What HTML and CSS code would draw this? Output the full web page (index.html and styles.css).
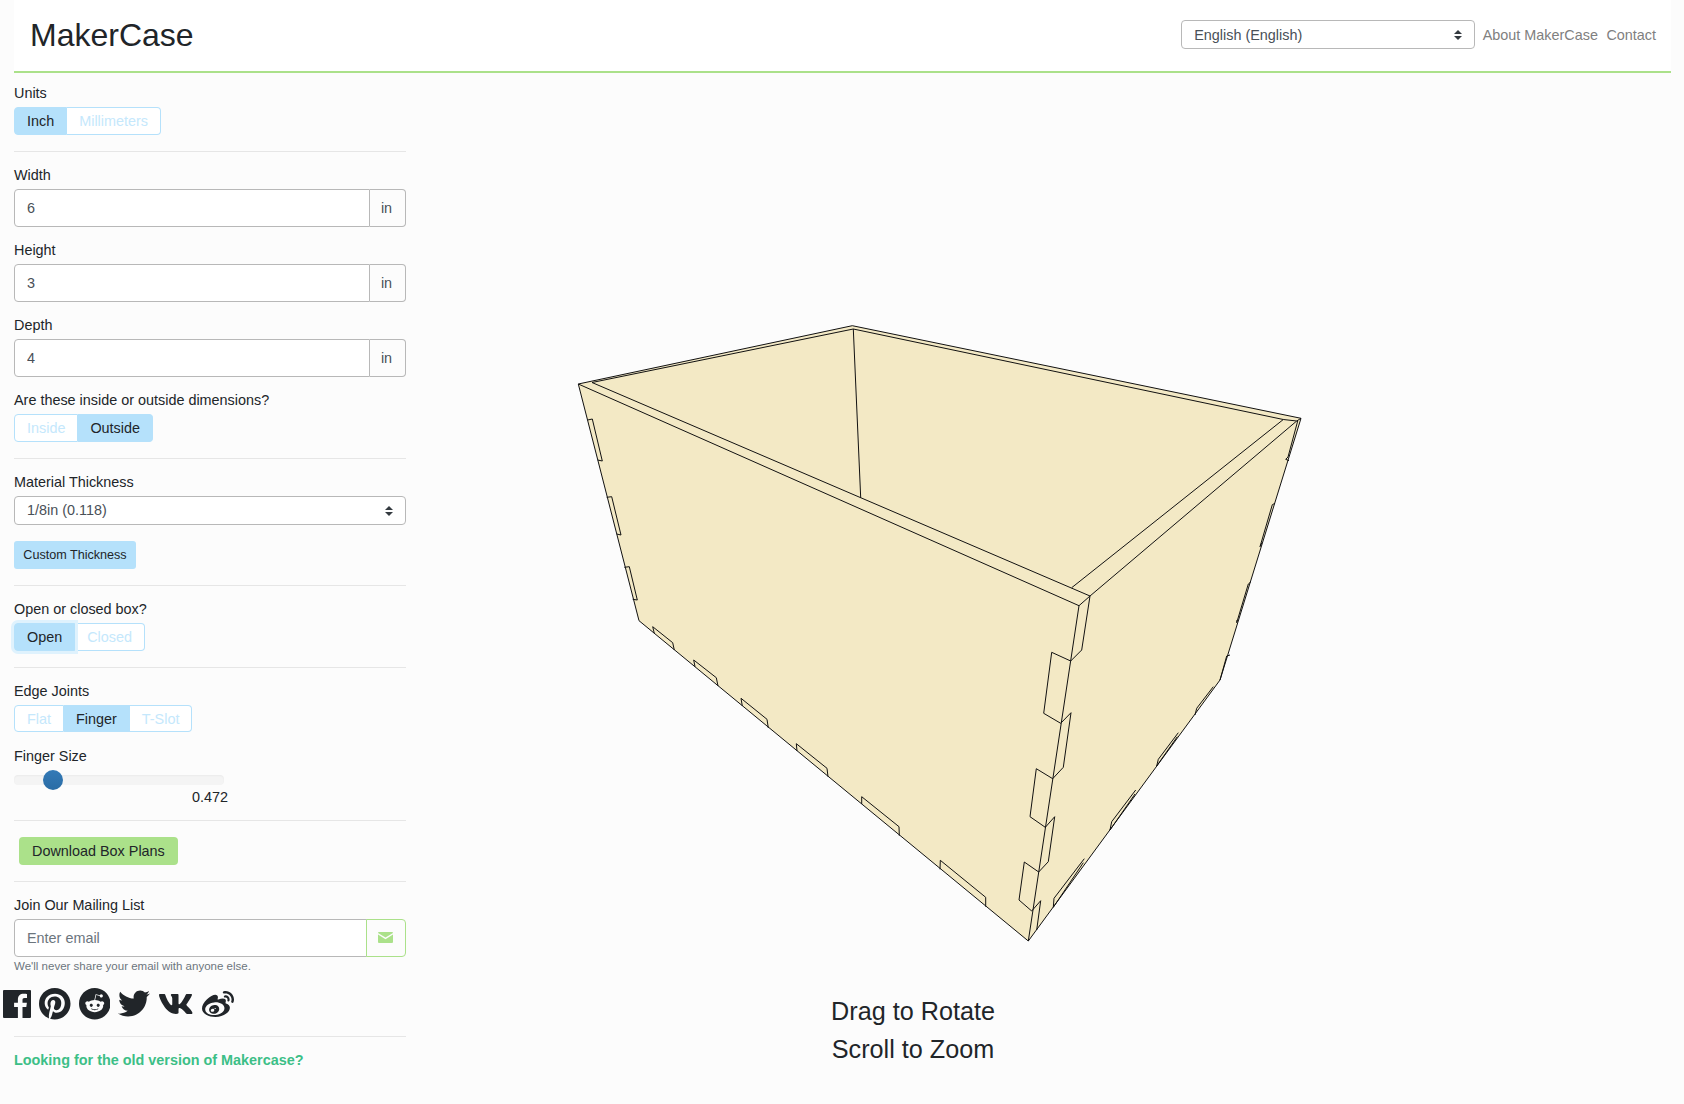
FILE: index.html
```html
<!DOCTYPE html>
<html lang="en">
<head>
  <meta charset="UTF-8">
  <meta name="viewport" content="width=device-width, initial-scale=1.0">
  <title>MakerCase</title>
  <link rel="stylesheet" href="styles.css">
</head>
<body>
  <header class="topbar">
    <h1 class="logo">MakerCase</h1>
    <div class="topbar-right">
      <div class="select-wrap lang-select">
        <select class="select"><option>English (English)</option></select>
        <svg class="caret" viewBox="0 0 8 10"><path d="M4 0 8 4H0zM0 6h8l-4 4z"/></svg>
      </div>
      <a class="nav-link" href="#">About MakerCase</a>
      <a class="nav-link" href="#">Contact</a>
    </div>
  </header>

  <div class="page">
    <aside class="sidebar">
      <label class="field-label">Units</label>
      <div class="toggle">
        <button class="toggle-btn on">Inch</button>
        <button class="toggle-btn">Millimeters</button>
      </div>
      <hr class="rule">

      <label class="field-label tall">Width</label>
      <div class="input-group">
        <input class="input" type="text" value="6">
        <span class="addon">in</span>
      </div>
      <label class="field-label tall next">Height</label>
      <div class="input-group">
        <input class="input" type="text" value="3">
        <span class="addon">in</span>
      </div>
      <label class="field-label tall next">Depth</label>
      <div class="input-group">
        <input class="input" type="text" value="4">
        <span class="addon">in</span>
      </div>

      <label class="field-label after-inputs">Are these inside or outside dimensions?</label>
      <div class="toggle">
        <button class="toggle-btn">Inside</button>
        <button class="toggle-btn on">Outside</button>
      </div>
      <hr class="rule">

      <label class="field-label">Material Thickness</label>
      <div class="select-wrap">
        <select class="select"><option>1/8in (0.118)</option></select>
        <svg class="caret" viewBox="0 0 8 10"><path d="M4 0 8 4H0zM0 6h8l-4 4z"/></svg>
      </div>
      <button class="small-btn">Custom Thickness</button>
      <hr class="rule">

      <label class="field-label">Open or closed box?</label>
      <div class="toggle">
        <button class="toggle-btn on focused">Open</button>
        <button class="toggle-btn">Closed</button>
      </div>
      <hr class="rule">

      <label class="field-label">Edge Joints</label>
      <div class="toggle">
        <button class="toggle-btn">Flat</button>
        <button class="toggle-btn on">Finger</button>
        <button class="toggle-btn">T-Slot</button>
      </div>

      <label class="field-label finger-label">Finger Size</label>
      <input class="slider" type="range" min="0" max="100" value="15">
      <div class="slider-value">0.472</div>
      <hr class="rule after-slider">

      <button class="download-btn">Download Box Plans</button>
      <hr class="rule">

      <label class="field-label">Join Our Mailing List</label>
      <div class="input-group">
        <input class="input email" type="text" placeholder="Enter email">
        <button class="mail-btn" aria-label="Subscribe">
          <svg class="mail-icon" viewBox="0 0 15 11"><path d="M0 1a1 1 0 0 1 1-1h13a1 1 0 0 1 1 1L7.5 5.6zM0 2.6l7.5 4.6L15 2.6V10a1 1 0 0 1-1 1H1a1 1 0 0 1-1-1z"/></svg>
        </button>
      </div>
      <small class="hint">We'll never share your email with anyone else.</small>

      <div class="social">
        <a href="#" class="social-fb"><svg viewBox="0 0 28 28"><path d="M0 1a1 1 0 0 1 1-1h26a1 1 0 0 1 1 1v26a1 1 0 0 1-1 1h-7.500V17h3.800l.6-4.300h-4.400V10c0-1.300.4-2.100 2.200-2.100H24V4c-.4-.1-1.800-.2-3.400-.2-3.400 0-5.700 2-5.700 5.800v3.100h-3.800V17h3.800v11H1a1 1 0 0 1-1-1z"/></svg></a>
        <a href="#" class="social-pin"><svg viewBox="0 8 496 496"><path d="M496 256c0 137-111 248-248 248-25.600 0-50.200-3.900-73.400-11.100 10.100-16.500 25.200-43.500 30.800-65 3-11.600 15.400-59 15.400-59 8.100 15.400 31.700 28.500 56.800 28.500 74.800 0 128.700-68.800 128.700-154.300 0-81.900-66.900-143.200-152.900-143.200-107 0-163.900 71.800-163.900 150.100 0 36.400 19.400 81.700 50.300 96.100 4.700 2.200 7.200 1.200 8.300-3.300.8-3.400 5-20.300 6.900-28.100.6-2.500.3-4.700-1.700-7.100-10.100-12.500-18.300-35.300-18.300-56.600 0-54.700 41.400-107.600 112-107.600 60.900 0 103.600 41.500 103.600 100.900 0 67.100-33.900 113.600-78 113.600-24.300 0-42.600-20.100-36.700-44.800 7-29.500 20.500-61.300 20.500-82.600 0-19-10.200-34.900-31.400-34.900-24.900 0-44.900 25.700-44.900 60.200 0 22 7.400 36.800 7.400 36.800s-24.500 103.800-29 123.200c-5 21.400-3 51.600-.9 71.200C65.400 450.900 0 361.100 0 256 0 119 111 8 248 8s248 111 248 248z"/></svg></a>
        <a href="#" class="social-red"><svg viewBox="8 8 496 496"><path d="M201.500 305.500c-13.800 0-24.900-11.100-24.900-24.600 0-13.800 11.100-24.900 24.900-24.900 13.600 0 24.600 11.100 24.600 24.900 0 13.600-11.100 24.600-24.600 24.600zM504 256c0 137-111 248-248 248S8 393 8 256 119 8 256 8s248 111 248 248zm-132.300-41.200c-9.400 0-17.700 3.900-23.800 10-22.400-15.500-52.600-25.500-86.100-26.600l17.400-78.300 55.400 12.500c0 13.600 11.100 24.600 24.600 24.600 13.800 0 24.900-11.300 24.900-24.900s-11.100-24.900-24.900-24.900c-9.700 0-18 5.800-22.100 13.800l-61.200-13.600c-3-.8-6.100 1.400-6.900 4.400l-19.100 86.400c-33.200 1.400-63.100 11.300-85.500 26.800-6.100-6.400-14.700-10.200-24.100-10.200-34.900 0-46.300 46.900-14.400 62.800-1.100 5-1.700 10.200-1.700 15.500 0 52.600 59.200 95.200 132 95.200 73.100 0 132.300-42.600 132.300-95.200 0-5.300-.6-10.800-1.900-15.800 31.300-16 19.800-62.500-14.900-62.500zM302.800 331c-18.200 18.200-76.100 17.900-93.600 0-2.200-2.200-6.100-2.200-8.300 0-2.500 2.500-2.500 6.400 0 8.600 22.800 22.800 87.300 22.800 110.200 0 2.500-2.200 2.500-6.100 0-8.600-2.200-2.200-6.100-2.200-8.300 0zm7.700-75c-13.600 0-24.600 11.100-24.600 24.900 0 13.600 11.100 24.600 24.600 24.600 13.800 0 24.900-11.100 24.900-24.600 0-13.800-11-24.900-24.900-24.900z"/></svg></a>
        <a href="#" class="social-tw"><svg viewBox="0 48 512 416"><path d="M459.370 151.716c.325 4.548.325 9.097.325 13.645 0 138.720-105.583 298.558-298.558 298.558-59.452 0-114.680-17.219-161.137-47.106 8.447.974 16.568 1.299 25.340 1.299 49.055 0 94.213-16.568 130.274-44.832-46.132-.975-84.792-31.188-98.112-72.772 6.498.974 12.995 1.624 19.818 1.624 9.421 0 18.843-1.300 27.614-3.573-48.081-9.747-84.143-51.980-84.143-102.985v-1.299c13.969 7.797 30.214 12.670 47.431 13.319-28.264-18.843-46.781-51.005-46.781-87.391 0-19.492 5.197-37.360 14.294-52.954 51.655 63.675 129.300 105.258 216.365 109.807-1.624-7.797-2.599-15.918-2.599-24.040 0-57.828 46.782-104.934 104.934-104.934 30.213 0 57.502 12.670 76.670 33.137 23.715-4.548 46.456-13.645 66.599-25.665-7.798 24.366-24.366 44.833-46.132 57.827 21.117-2.273 41.584-8.122 60.426-16.243-14.292 20.791-32.161 39.308-52.628 54.253z"/></svg></a>
        <a href="#" class="social-vk"><svg viewBox="14 96 548 320"><path d="M545 117.700c3.700-12.500 0-21.700-17.800-21.700h-58.900c-15 0-21.900 7.900-25.600 16.700 0 0-31.500 77.300-76 127.400-14.400 14.500-21 19.100-28.900 19.100-3.900 0-9.100-4.600-9.100-17.100V117.700c0-15-4.400-21.700-16.900-21.700h-92.600c-9.400 0-15 7-15 13.500 0 14.200 21.200 17.500 23.400 57.500v86.800c0 19-3.400 22.500-10.900 22.500-20 0-68.600-73.400-97.400-157.400-5.800-16.300-11.500-22.900-26.600-22.900H34.400C17.600 96 14.200 103.900 14.200 112.700c0 15.600 20 93.100 93.100 195.500C156 378.100 224.700 416 287.100 416c37.500 0 42.100-8.400 42.100-22.900 0-66.800-3.400-73.100 15.400-73.100 8.700 0 23.700 4.400 58.700 38.100 40 40 46.600 57.900 69 57.900h58.900c16.800 0 25.300-8.400 20.400-25-11.200-34.900-86.900-106.700-90.300-111.500-8.700-11.200-6.200-16.200 0-26.200.1-.1 72-101.300 79.400-135.600z"/></svg></a>
        <a href="#" class="social-wb"><svg viewBox="0 32 512 416"><path d="M407 177.600c7.600-24-13.400-46.800-37.400-41.700-22 4.800-28.800-28.100-7.100-32.800 50.100-10.900 92.300 37.100 76.500 84.800-6.800 21.200-38.800 10.800-32-10.300zM214.800 446.700C108.500 446.700 0 395.300 0 310.400c0-44.300 28-95.400 76.300-143.700C176 67 279.500 65.800 249.900 161c-4 13.100 12.300 5.700 12.300 6 79.500-33.600 140.500-16.800 114 51.400-3.700 9.400 1.100 10.900 8.300 13.100 135.700 42.300 34.800 215.200-169.700 215.200zm143.700-146.300c-5.400-55.700-78.500-94-163.400-85.700-84.800 8.600-148.800 60.300-143.400 116s78.500 94 163.400 85.700c84.800-8.600 148.800-60.300 143.400-116zM347.900 35.100c-25.900 5.600-16.800 43.700 8.300 38.300 72.300-15.200 134.800 52.800 111.700 124-7.400 24.200 29.100 37 37.400 12 31.900-99.800-55.100-195.900-157.400-174.300zm-78.500 311c-17.100 38.800-66.800 60-109.100 46.300-40.800-13.100-58-53.400-40.300-89.700 17.700-35.400 63.100-55.400 103.400-45.100 42 10.800 63.100 50.200 46 88.500zm-86.300-30c-12.900-5.400-30 .3-38 12.900-8.300 12.900-4.300 28 8.600 34 13.100 6 30.800.3 39.100-12.900 8-13.100 3.700-28.300-9.700-34zm32.600-13.400c-5.100-1.700-11.400.6-14.300 5.400-2.900 5.100-1.400 10.600 3.700 12.900 5.100 2 11.700-.3 14.600-5.400 2.800-5.200 1.100-10.900-4-12.900z"/></svg></a>
      </div>
      <hr class="rule last-rule">
      <a class="old-link" href="#">Looking for the old version of Makercase?</a>
    </aside>

    <main class="viewer">
      <!-- viewBox uses page coordinates so the points read straight off the screenshot -->
      <svg class="box" viewBox="406 73 1014 919">
        <polygon class="face" points="578.3,384 852.3,325.7 1301,418.3 1220,680 1028.3,941 639,620.7"/>
        <g class="lines">
          <!-- rim -->
          <path d="M578.3 384 852.300 325.700 1301 418.300"/>
          <path d="M592 382.500 853.300 329 1283.300 419.500 1296.700 421 1301 418.300"/>
          <path d="M578.300 384 1079 605.700 1090 596 592 382.500"/>
          <path d="M1071.700 587.700 1283.300 419.500"/>
          <path d="M1090 596 1296.700 421"/>
          <path d="M853.300 329 860.700 497.700"/>
          <!-- outline -->
          <path d="M578.300 384 639 620.700 1028.300 941 1220 680 1301 418.300"/>
          <!-- left edge fingers -->
          <path d="M587.700 420 592.300 419 602.300 461 597.700 460"/>
          <path d="M606.700 497.300 611.700 496.700 621 535 616.700 534"/>
          <path d="M624.300 567.300 629.300 566.700 637.300 600 632.700 599.300"/>
          <!-- bottom edge fingers -->
          <path d="M654.300 633.300 652.700 626.700 672.700 642.700 674.300 650"/>
          <path d="M695 666.700 693.700 660 716.300 677.700 718 686"/>
          <path d="M742.300 706 741 698.300 767 719.300 768.300 728"/>
          <path d="M797 751 796.300 743.700 827 768.300 828 776.700"/>
          <path d="M861.700 804 861.700 796.700 899 826.700 899.300 835.700"/>
          <path d="M940 869.300 940.300 860.300 985.700 897.300 985.700 906.700"/>
          <!-- front corner fingers -->
          <path d="M1090 596 1081.700 650 1070.700 661 1051.700 652.300 1043.700 713.300 1060.700 723.300 1071 712.700 1063.300 767.300 1052.700 778.700 1036.300 768.700 1030 816.700 1045.300 827.300 1054.700 816.700 1048.300 861.700 1038.700 872 1024.300 862 1019 900 1031.700 911 1040.700 900.700 1036.700 930"/>
          <path d="M1079 605.700 1028.300 941"/>
          <!-- right edge fingers -->
          <path d="M1297.700 421 1288 457 1285.700 459.300 1289 460.700"/>
          <path d="M1275 503.300 1272.300 504.700 1260 546.700 1261.700 543"/>
          <path d="M1250.700 582 1248.300 584 1236.700 622.700 1237 620"/>
          <path d="M1230 655 1226.700 656 1220 680"/>
          <!-- lower right fingers -->
          <path d="M1213.300 686.700 1196.700 708.300 1195 715"/>
          <path d="M1178.300 732.700 1158.300 759.300 1156.700 766 1177.300 736.700"/>
          <path d="M1135.700 790 1111.700 821.700 1110 830 1135 794"/>
          <path d="M1084.300 858.700 1054 898.300 1053.300 907.300 1083.300 862.700"/>
        </g>
      </svg>
      <div class="hint-line">Drag to Rotate</div>
      <div class="hint-line">Scroll to Zoom</div>
    </main>
  </div>
</body>
</html>
```

FILE: styles.css
```css
* {
  box-sizing: border-box;
}

body {
  margin: 0;
  background: #fcfcfc;
  color: #212529;
  font-family: "Liberation Sans", Arial, sans-serif;
  font-size: 14.4px;
  line-height: 21.6px;
}

a {
  text-decoration: none;
}

button,
input,
select {
  font-family: inherit;
  font-size: inherit;
}

/* header */
.topbar {
  display: flex;
  justify-content: space-between;
  align-items: center;
  width: 1657px;
  height: 73px;
  margin-left: 14px;
  padding: 0 15px 0 16px;
  background: #fff;
  border-bottom: 2px solid #abe18a;
}

.logo {
  margin: 0;
  font-size: 32px;
  font-weight: 400;
  line-height: 1.2;
}

.topbar-right {
  display: flex;
  align-items: center;
}

.lang-select {
  width: 294px;
  margin-top: -2px;
  margin-right: 7.5px;
}

.nav-link {
  margin-right: 8.500px;
  color: #808080;
}

.nav-link:last-child {
  margin-right: 0;
}

/* layout */
.page {
  display: flex;
}

.sidebar {
  flex: none;
  width: 392px;
  margin-left: 14px;
  padding-top: 10px;
}

.viewer {
  flex: none;
  width: 1014px;
  text-align: center;
}

/* form bits */
.field-label {
  display: block;
  margin-bottom: 2.6px;
}

.field-label.tall {
  margin-bottom: 3px;
}

.field-label.next {
  margin-top: 12.8px;
}

.after-inputs {
  margin-top: 13px;
}

.finger-label {
  margin-top: 13.6px;
  margin-bottom: 2.4px;
}

.rule {
  height: 1px;
  margin: 16px 0 13px;
  border: 0;
  background: #e6e6e6;
}

.after-slider {
  margin-top: 11.8px;
}

.last-rule {
  margin-top: 16px;
}

.toggle {
  display: flex;
}

.toggle-btn {
  position: relative;
  height: 27.6px;
  padding: 1px 12px 0;
  border: 1px solid #b5e1fb;
  border-left-width: 0;
  background: #fff;
  color: #c5e8fc;
  line-height: 25.6px;
}

.toggle-btn:first-child {
  border-left-width: 1px;
  border-radius: 4px 0 0 4px;
}

.toggle-btn:last-child {
  border-radius: 0 4px 4px 0;
}

.toggle-btn.on {
  background: #b5e1fb;
  color: #212529;
}

.toggle-btn.focused {
  z-index: 1;
  box-shadow: 0 0 0 3px #dff2fd;
}

.input-group {
  display: flex;
  height: 37.6px;
}

.input {
  flex: 1;
  min-width: 0;
  height: 100%;
  padding: 0 12px 1px;
  border: 1px solid #b8b8b8;
  border-radius: 4px 0 0 4px;
  background: #fff;
  color: #495057;
}

.input.email {
  padding-bottom: 0;
}

.input::placeholder {
  color: #6c757d;
  opacity: 1;
}

.addon {
  flex: none;
  width: 36px;
  padding: 1px 2px 0 0;
  border: 1px solid #b8b8b8;
  border-left: 0;
  border-radius: 0 4px 4px 0;
  background: #fcfcfc;
  color: #495057;
  line-height: 35.6px;
  text-align: center;
}

.select-wrap {
  position: relative;
}

.select {
  display: block;
  width: 100%;
  height: 29px;
  padding: 0 28px 0 12px;
  border: 1px solid #b8b8b8;
  border-radius: 4px;
  background: #fff;
  color: #495057;
  appearance: none;
  -webkit-appearance: none;
}

.caret {
  position: absolute;
  top: 10px;
  right: 13px;
  width: 8px;
  height: 10px;
  fill: #343a40;
}

.small-btn {
  display: block;
  width: 122px;
  height: 28px;
  margin-top: 16px;
  padding: 0;
  border: 0;
  border-radius: 3px;
  background: #b5e1fb;
  color: #212529;
  font-size: 12.6px;
}

.slider {
  display: block;
  width: 210px;
  height: 20px;
  margin: 0;
  background: transparent;
  appearance: none;
  -webkit-appearance: none;
}

.slider::-webkit-slider-runnable-track {
  height: 10px;
  border-radius: 4px;
  background: #f4f4f4;
  box-shadow: inset 0 1px 2px rgba(0, 0, 0, .04);
}

.slider::-webkit-slider-thumb {
  width: 20px;
  height: 20px;
  margin-top: -5px;
  border-radius: 50%;
  background: linear-gradient(#337ab7, #2a6ca5);
  -webkit-appearance: none;
}

.slider-value {
  width: 214px;
  margin-top: -3.400px;
  text-align: right;
}

.download-btn {
  display: block;
  height: 28px;
  margin: 16px 0 0 5px;
  padding: 0 13px;
  border: 0;
  border-radius: 4px;
  background: #abe18a;
  color: #212529;
}

.mail-btn {
  flex: none;
  width: 40px;
  margin-left: -1px;
  padding: 0 1px 2px 0;
  border: 1px solid #abe18a;
  border-radius: 0 4px 4px 0;
  background: #fcfcfc;
}

.mail-icon {
  display: block;
  width: 15px;
  height: 11px;
  margin: 0 auto;
  fill: #abe18a;
}

.hint {
  display: block;
  margin-top: 1px;
  color: #6c757d;
  font-size: 11.52px;
  line-height: 17px;
}

.social {
  display: flex;
  align-items: center;
  height: 32px;
  margin: 13px 0 0 -11px;
}

.social a {
  display: block;
  color: #212529;
}

.social svg {
  display: block;
  height: 100%;
  width: 100%;
  fill: #212529;
}

.social-fb { width: 28px; height: 28px; }
.social-pin { width: 31.500px; height: 31.500px; margin-left: 8px; }
.social-red { width: 31.500px; height: 31.500px; margin-left: 8px; }
.social-tw { width: 32px; height: 27px; margin-left: 8px; }
.social-vk { width: 34px; height: 20px; margin-left: 9px; }
.social-wb { width: 32px; height: 26px; margin-left: 9px; }

.old-link {
  color: #3cbf87;
  font-weight: 700;
}

/* box preview */
.box {
  display: block;
  width: 1014px;
  height: 919px;
}

.face {
  fill: #f3e9c5;
}

.lines path {
  fill: none;
  stroke: #111;
  stroke-width: 1;
  stroke-linejoin: round;
}

.hint-line {
  font-size: 25.2px;
  line-height: 38.4px;
}
```
